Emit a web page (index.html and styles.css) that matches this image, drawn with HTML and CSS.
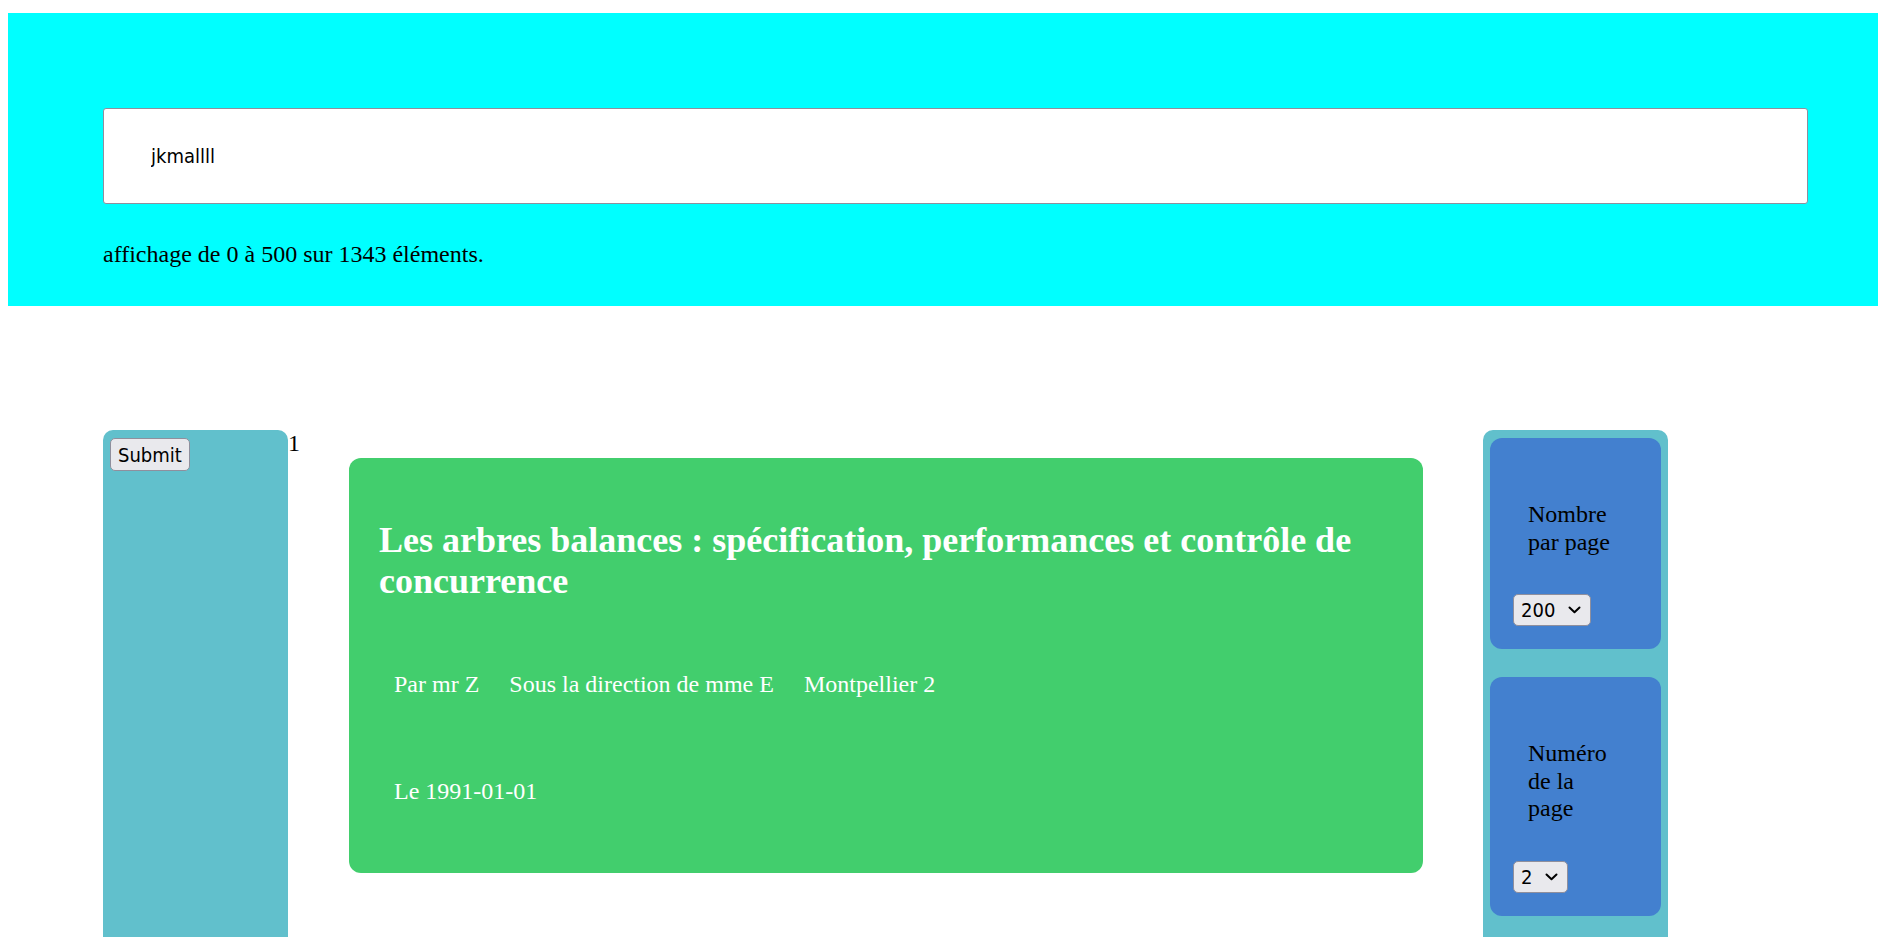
FILE: index.html
```html
<!DOCTYPE html>
<html lang="fr">
<head>
<meta charset="utf-8">
<title>Thèses</title>
<link rel="stylesheet" href="styles.css">
</head>
<body>
<header class="header">
  <input class="search" type="text" value="jkmallll">
  <p class="count">affichage de 0 à 500 sur 1343 éléments.</p>
</header>
<main class="main">
  <aside class="sidebar">
    <button class="btn" type="submit">Submit</button>
  </aside>
  <section class="center">
    <div class="index">1</div>
    <article class="card">
      <h2 class="title">Les arbres balances : spécification, performances et contrôle de concurrence</h2>
      <div class="meta">
        <span class="meta-item">Par mr Z</span>
        <span class="meta-item">Sous la direction de mme E</span>
        <span class="meta-item">Montpellier 2</span>
      </div>
      <div class="date">Le 1991-01-01</div>
    </article>
  </section>
  <aside class="panel">
    <div class="box">
      <label class="box-label" for="nb">Nombre par page</label>
      <span class="select-wrap">
        <select id="nb" class="select">
          <option>50</option>
          <option>100</option>
          <option selected>200</option>
        </select>
        <svg class="chev" width="13" height="8" viewBox="0 0 13 8"><path d="M1.5 1.5 L6.5 6.3 L11.5 1.5" fill="none" stroke="#000" stroke-width="2" stroke-linecap="round" stroke-linejoin="round"/></svg>
      </span>
    </div>
    <div class="box">
      <label class="box-label" for="pg">Numéro de la page</label>
      <span class="select-wrap">
        <select id="pg" class="select">
          <option>1</option>
          <option selected>2</option>
          <option>3</option>
        </select>
        <svg class="chev" width="13" height="8" viewBox="0 0 13 8"><path d="M1.5 1.5 L6.5 6.3 L11.5 1.5" fill="none" stroke="#000" stroke-width="2" stroke-linecap="round" stroke-linejoin="round"/></svg>
      </span>
    </div>
  </aside>
</main>
</body>
</html>
```

FILE: styles.css
```css
html, body {
  margin: 0;
  padding: 0;
  background: #fff;
}

body {
  font-family: "Liberation Serif", "Times New Roman", serif;
  font-size: 24px;
  color: #000;
  overflow: hidden;
}

.header {
  margin: 13px 0 0 8px;
  height: 293px;
  box-sizing: border-box;
  padding: 95px 0 0 95px;
  background: #00ffff;
}

.search {
  display: block;
  width: 1705px;
  height: 96px;
  box-sizing: border-box;
  margin: 0;
  padding: 0 0 0 47px;
  border: 1px solid #8f8f9d;
  border-radius: 3px;
  background: #fff;
  color: #000;
  font-family: "DejaVu Sans Condensed", "DejaVu Sans", sans-serif;
  font-stretch: condensed;
  font-size: 20px;
  outline: none;
}

.count {
  margin: 37px 0 0;
  line-height: 27.6px;
}

.main {
  display: flex;
  align-items: stretch;
  margin-top: 124px;
  padding-left: 103px;
}

.sidebar {
  width: 185px;
  flex: none;
  box-sizing: border-box;
  padding: 8px 7px;
  background: #61c0cc;
  border-radius: 10px 10px 0 0;
}

.btn {
  height: 33px;
  margin: 0;
  padding: 0 7px;
  border: 1px solid #8f8f9d;
  border-radius: 5px;
  background: #e9e9ed;
  color: #000;
  font-family: "DejaVu Sans Condensed", "DejaVu Sans", sans-serif;
  font-stretch: condensed;
  font-size: 20px;
}

.center {
  width: 1195px;
  flex: none;
}

.index {
  line-height: 27.6px;
}

.card {
  margin: 0 60px 0 61px;
  padding: 62px 30px 67px;
  background: #42ce6d;
  border-radius: 12px;
  color: #fff;
}

.title {
  margin: 0;
  font-size: 36px;
  font-weight: bold;
  line-height: 41.5px;
}

.meta {
  display: flex;
  margin-top: 68px;
  line-height: 27.6px;
}

.meta-item {
  padding: 0 15px;
}

.date {
  margin-top: 80px;
  padding-left: 15px;
  line-height: 27.6px;
}

.panel {
  width: 185px;
  flex: none;
  box-sizing: border-box;
  padding: 8px 7px 40px;
  background: #61c0cc;
  border-radius: 10px 10px 0 0;
}

.box {
  padding: 63px 0 23px 23px;
  background: #4380cf;
  border-radius: 12px;
}

.box + .box {
  margin-top: 28px;
}

.box-label {
  display: block;
  margin-left: 15px;
  width: 90px;
  line-height: 27.6px;
}

.select-wrap {
  position: relative;
  display: inline-block;
  margin-top: 38px;
  vertical-align: top;
}

.select {
  display: block;
  height: 32px;
  margin: 0;
  padding: 0 34px 0 7px;
  border: 1px solid #8f8f9d;
  border-radius: 5px;
  background: #e9e9ed;
  color: #000;
  font-family: "DejaVu Sans Condensed", "DejaVu Sans", sans-serif;
  font-stretch: condensed;
  font-size: 20px;
  -webkit-appearance: none;
  appearance: none;
}

.chev {
  position: absolute;
  right: 10px;
  top: 12px;
  pointer-events: none;
}
```
